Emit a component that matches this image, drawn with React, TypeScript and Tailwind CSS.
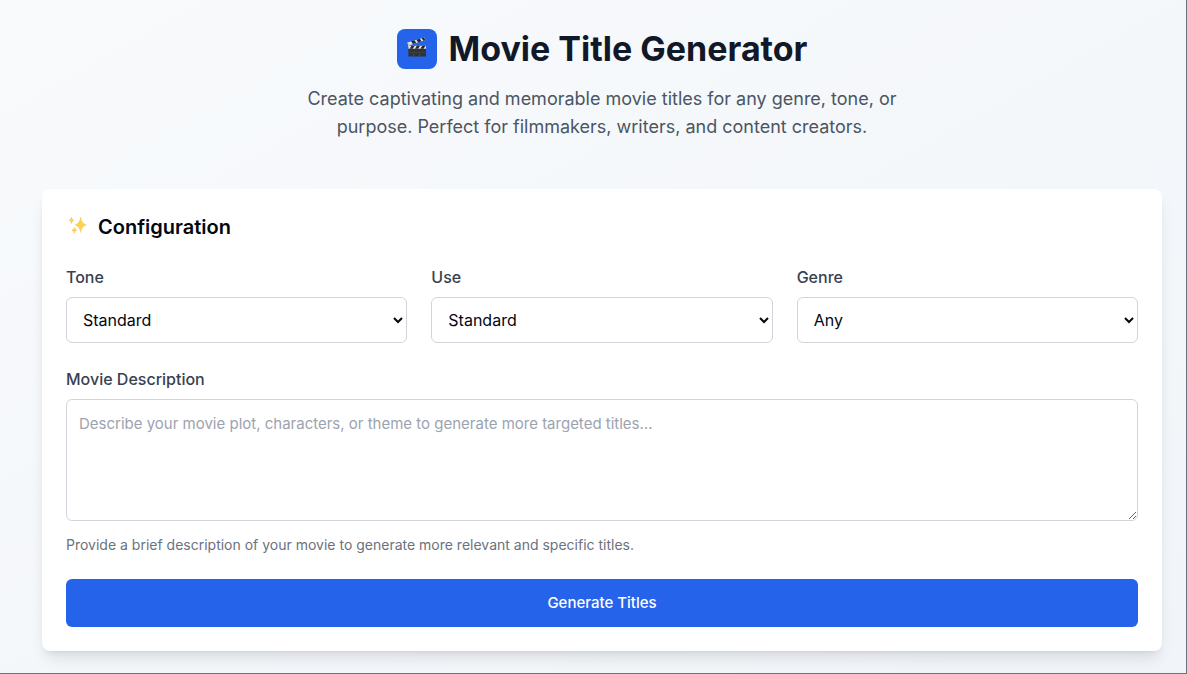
import { useState } from "react"

const fields = [
  { id: "tone", label: "Tone", options: ["Standard", "Serious", "Funny", "Dark"] },
  { id: "use", label: "Use", options: ["Standard", "Feature Film", "Short Film"] },
  { id: "genre", label: "Genre", options: ["Any", "Action", "Comedy", "Drama"] },
]

function ClapperIcon() {
  return (
    <svg viewBox="0 0 20 20" className="size-5" aria-hidden="true">
      <path d="M0.4 5.4L17.4 0.4l1 2.6L1.6 8.6z" fill="#e5e7eb" />
      <path d="M4 4.3l3.4-1 1.9 2.7-3.4 1.1zM9.4 2.7l3.4-1 1.8 2.6-3.4 1.1zM14.6 1.2l2.4-.7 1.4 2.5-2 .7z" fill="#26282b" />
      <path d="M0.4 5.4l1.8.4 1.8 4H1.4z" fill="#c9ccd1" />
      <rect x="1.4" y="8.8" width="17.6" height="10.8" rx="0.9" fill="#303236" />
      <rect x="1.4" y="8.8" width="17.6" height="3" rx="0.4" fill="#e5e7eb" />
      <path d="M4.4 8.8h3.2l-1.8 3H2.6zM9.8 8.8H13l-1.8 3H8zM15.2 8.8h3.2l-1.8 3h-3.2z" fill="#26282b" />
      <path d="M1.6 15.4h17.2" stroke="#4b4e54" strokeWidth="0.6" />
      <path d="M6.8 16.8v2M12.8 16.8v2" stroke="#62656b" strokeWidth="0.6" />
    </svg>
  )
}

function SparklesIcon() {
  return (
    <svg viewBox="0 0 24 24" className="size-6" aria-hidden="true">
      <g fill="#fcd34d" stroke="#f3b98a" strokeWidth="0.3">
        <path d="M14.6 2Q15.6 8.8 20.6 9.9Q15.6 11 14.6 17.8Q13.6 11 8.8 9.9Q13.6 8.8 14.6 2Z" />
        <path d="M5.5 2Q6 4.8 8.1 5.3Q6 5.8 5.5 8.8Q5 5.8 2.9 5.3Q5 4.8 5.5 2Z" />
        <path d="M8.3 12Q8.8 14.8 11 15.3Q8.8 15.8 8.3 18.5Q7.8 15.8 5.7 15.3Q7.8 14.8 8.3 12Z" />
      </g>
    </svg>
  )
}

export default function App() {
  const [description, setDescription] = useState("")

  return (
    <div className="min-h-screen border-r border-b border-[#6b7280] bg-gradient-to-br from-slate-50 to-slate-100 pt-[29px] pr-6 pb-5 pl-[42px] font-['Inter','Liberation_Sans',sans-serif] text-[#030712]">
      <header className="mb-12 text-center">
        <div className="mb-4 flex items-center justify-center gap-3">
          <div className="flex size-10 items-center justify-center rounded-lg bg-[#2563eb] pb-1">
            <ClapperIcon />
          </div>
          <h1 className="text-[34px] leading-10 font-bold text-[#111827]">Movie Title Generator</h1>
        </div>
        <p className="mx-auto max-w-2xl px-6 text-lg leading-7 text-[#4b5563]">
          Create captivating and memorable movie titles for any genre, tone, or
          <br />
          purpose. Perfect for filmmakers, writers, and content creators.
        </p>
      </header>

      <main className="rounded-lg bg-white p-6 shadow-lg">
        <h2 className="mb-6 flex items-center gap-2 text-xl font-semibold">
          <SparklesIcon />
          Configuration
        </h2>
        <form onSubmit={(e) => e.preventDefault()}>
          <div className="mb-6 grid grid-cols-3 gap-6">
            {fields.map((field) => (
              <div key={field.id}>
                <label htmlFor={field.id} className="mb-2 block font-medium text-[#374151]">
                  {field.label}
                </label>
                <select
                  id={field.id}
                  className="h-[46px] w-full rounded-md border border-[#d1d5db] bg-white px-3"
                >
                  {field.options.map((option) => (
                    <option key={option}>{option}</option>
                  ))}
                </select>
              </div>
            ))}
          </div>
          <label htmlFor="description" className="mb-2 block font-medium text-[#374151]">
            Movie Description
          </label>
          <textarea
            id="description"
            rows={4}
            value={description}
            onChange={(e) => setDescription(e.target.value)}
            placeholder="Describe your movie plot, characters, or theme to generate more targeted titles..."
            className="block min-h-[122px] w-full rounded-md border border-[#d1d5db] p-3 text-[15px] leading-6 placeholder:text-[#9ca3af]"
          />
          <p className="mt-3.5 mb-6 text-sm text-[#6b7280]">
            Provide a brief description of your movie to generate more relevant and specific titles.
          </p>
          <button
            type="submit"
            className="w-full rounded-md bg-[#2563eb] px-4 py-3 text-[15px] leading-6 font-medium text-white hover:bg-blue-700"
          >
            Generate Titles
          </button>
        </form>
      </main>
    </div>
  )
}
